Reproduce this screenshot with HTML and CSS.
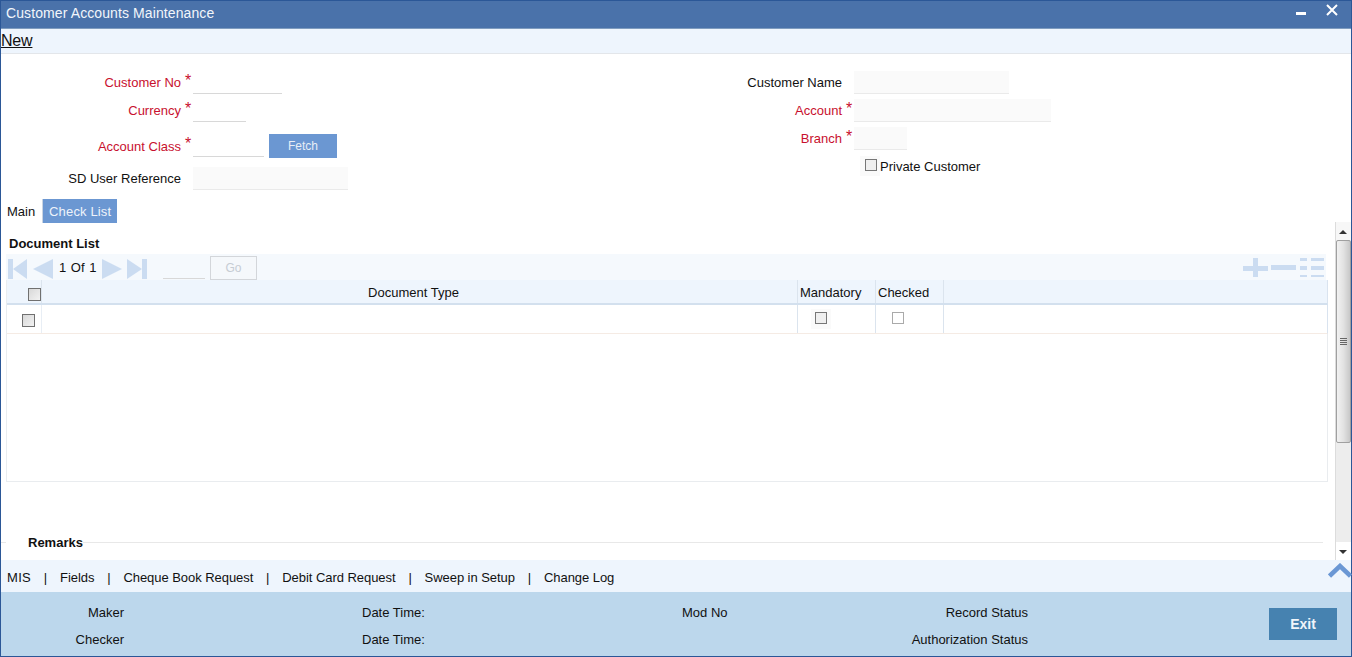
FILE: index.html
```html
<!DOCTYPE html>
<html lang="en">
<head>
<meta charset="utf-8">
<title>Customer Accounts Maintenance</title>
<link rel="stylesheet" href="styles.css">
</head>
<body>
<div class="window">
  <header class="titlebar">
    <span class="title">Customer Accounts Maintenance</span>
    <span class="win-btns">
      <svg class="ico-min" width="10" height="3" viewBox="0 0 10 3"><rect width="10" height="3" fill="#fff"/></svg>
      <svg class="ico-close" width="12" height="12" viewBox="0 0 12 12"><path d="M1 1 11 11M11 1 1 11" stroke="#fff" stroke-width="2" fill="none"/></svg>
    </span>
  </header>
  <div class="toolbar"><a class="new-link">New</a></div>

  <section class="form">
    <div class="form-col">
      <div class="field r1"><span class="lbl req">Customer No</span><span class="star">*</span><span class="inp w89"></span></div>
      <div class="field r2"><span class="lbl req">Currency</span><span class="star">*</span><span class="inp w53"></span></div>
      <div class="field r3"><span class="lbl req">Account Class</span><span class="star">*</span><span class="inp w71"></span><button class="fetch">Fetch</button></div>
      <div class="field r4"><span class="lbl">SD User Reference</span><span class="star"></span><span class="inp ro w155"></span></div>
    </div>
    <div class="form-col right">
      <div class="field r1"><span class="lbl">Customer Name</span><span class="star"></span><span class="inp ro w155"></span></div>
      <div class="field r2"><span class="lbl req">Account</span><span class="star">*</span><span class="inp ro w197"></span></div>
      <div class="field r2"><span class="lbl req">Branch</span><span class="star">*</span><span class="inp ro w53"></span></div>
      <label class="private"><span class="cb-wrap"><span class="cb"></span></span>Private Customer</label>
    </div>
  </section>

  <nav class="tabs"><span class="tab">Main</span><span class="tab active">Check List</span></nav>

  <div class="pane">
    <div class="pane-main">
      <h2 class="doc-title">Document List</h2>
      <div class="grid-tools">
        <svg class="nav" width="140" height="20" viewBox="0 0 140 20" fill="#cbdcf1">
          <rect x="1" y="0" width="5" height="20"/><path d="M6 10 20 0V20Z"/>
          <path d="M26 10 46 0V20Z"/>
          <path d="M95 0 115 10 95 20Z"/>
          <path d="M120 0 135 10 120 20Z"/><rect x="135" y="0" width="5" height="20"/>
        </svg>
        <span class="pager">1 Of 1</span>
        <span class="page-inp"></span>
        <button class="go">Go</button>
        <svg class="tools" width="81" height="19" viewBox="0 0 81 19" fill="#cbdcf1">
          <rect x="0" y="8" width="25" height="5"/><rect x="10" y="0" width="5" height="19"/>
          <rect x="28" y="7" width="25" height="5"/>
          <rect x="57" y="0" width="7" height="3"/><rect x="57" y="8" width="7" height="4"/><rect x="57" y="17" width="7" height="2"/>
          <rect x="68" y="0" width="13" height="3"/><rect x="68" y="8" width="13" height="4"/><rect x="68" y="17" width="13" height="2"/>
        </svg>
      </div>
      <div class="table">
        <div class="thead">
          <div class="c c-sel"><span class="cb big"></span></div>
          <div class="c c-type">Document Type</div>
          <div class="c c-man">Mandatory</div>
          <div class="c c-chk">Checked</div>
          <div class="c c-rest"></div>
        </div>
        <div class="trow">
          <div class="c c-sel"><span class="cb big shift"></span></div>
          <div class="c c-type"></div>
          <div class="c c-man"><span class="cb-wrap"><span class="cb"></span></span></div>
          <div class="c c-chk"><span class="cb off"></span></div>
          <div class="c c-rest"></div>
        </div>
      </div>
      <div class="remarks"><span>Remarks</span></div>
    </div>
    <div class="scrollbar">
      <span class="arrow up"></span>
      <span class="thumb"><i></i></span>
      <span class="arrow down"></span>
    </div>
  </div>

  <div class="links">
    <span class="mis">MIS</span><b>|</b><span>Fields</span><b>|</b><span>Cheque Book Request</span><b>|</b><span>Debit Card Request</span><b>|</b><span>Sweep in Setup</span><b>|</b><span>Change Log</span>
    <svg class="chev" width="24" height="16" viewBox="0 0 24 16"><path d="M1.5 13 12 3 22.5 13" fill="none" stroke="#6a97d4" stroke-width="4.5" stroke-linejoin="miter"/></svg>
  </div>

  <footer class="audit">
    <div class="audit-grid">
      <span class="a1">Maker</span><span class="a2">Date Time:</span><span class="a3">Mod No</span><span class="a4">Record Status</span>
      <span class="a1">Checker</span><span class="a2">Date Time:</span><span class="a3"></span><span class="a4">Authorization Status</span>
    </div>
    <button class="exit">Exit</button>
  </footer>
</div>
</body>
</html>
```
FILE: styles.css
```css
* { box-sizing: border-box; }
html, body { margin: 0; height: 100%; overflow: hidden; }
body { font: 13px "Liberation Sans", Arial, sans-serif; color: #111; background: #fff; }

.window { height: 657px; display: flex; flex-direction: column; border: 1px solid #2b5797; }

.titlebar { height: 28px; flex: none; background: #4a72aa; border-bottom: 1px solid #7f9cbf; display: flex; align-items: center; justify-content: space-between; padding: 0 13px 0 5px; color: #f2f6fb; }
.title { position: relative; top: -2px; font-size: 14px; letter-spacing: 0.1px; }
.win-btns { display: flex; align-items: flex-start; gap: 20px; height: 100%; }
.ico-min { margin-top: 11px; }
.ico-close { margin-top: 3px; }

.toolbar { height: 25px; flex: none; background: #eef5fd; border-bottom: 1px solid #e3e6ea; }
.new-link { font-size: 16px; line-height: 23px; letter-spacing: -0.2px; text-decoration: underline; color: #111; }

.form { height: 145px; flex: none; display: grid; grid-template-columns: 690px 1fr; padding-top: 17px; }
.form-col { display: flex; flex-direction: column; }
.field { display: flex; align-items: center; height: 23px; }
.r1, .r2 { margin-bottom: 5px; }
.r3 { height: 24px; margin-top: 7px; margin-bottom: 9px; }
.r3 .inp { align-self: flex-start; }
.lbl { text-align: right; width: 180px; }
.right .lbl { width: 151px; }
.req { color: #c8102e; }
.star { width: 12px; color: #c8102e; font-size: 16px; padding-left: 4px; align-self: flex-start; line-height: 20px; }
.inp { display: block; height: 23px; border-bottom: 1px solid #d8d8d8; }
.ro { background: #fafafa; border-bottom-color: #eaeaea; }
.w53 { width: 53px; } .w71 { width: 71px; } .w89 { width: 89px; } .w155 { width: 155px; } .w197 { width: 197px; }
.fetch { width: 68px; height: 24px; margin-left: 5px; border: 0; padding: 0; background: #6b97d2; color: #e8eef6; font: 12px "Liberation Sans", Arial, sans-serif; }
.private { display: flex; align-items: center; height: 20px; margin: 1px 0 0 169px; }
.cb-wrap { display: flex; align-items: center; justify-content: center; width: 20px; height: 20px; background: #fafafa; }
.private .cb-wrap .cb { position: relative; top: -1px; left: 1px; }

.cb { display: inline-block; width: 12px; height: 12px; border: 1px solid #777; background: #efefef; }
.cb.big { width: 13px; height: 13px; background: linear-gradient(135deg, #d8d8d8, #f2f2f2); border-color: #707070; }
.cb.off { background: #fff; border-color: #aaa; }

.tabs { height: 23px; flex: none; display: flex; padding-left: 6px; gap: 7px; position: relative; z-index: 1; }
.tab { line-height: 25px; height: 24px; }
.tab.active { width: 75px; text-align: center; letter-spacing: 0.15px; background: #6b97d2; color: #eef3fa; border-left: 1px solid #c9d4e2; }

.pane { flex: 1; min-height: 0; display: flex; overflow: hidden; }
.pane-main { flex: 1; min-width: 0; padding: 13px 6px 0 4px; }
.doc-title { margin: 0; height: 19px; padding-left: 4px; font-size: 13px; font-weight: bold; line-height: 18px; }
.grid-tools { height: 26px; margin-right: 3px; margin-left: 1px; background: #f5f9fd; display: flex; align-items: center; padding: 0 2px 0 1px; }
.nav { flex: none; margin: 4px -140px 0 0; }
.pager { width: 88px; margin-left: 52px; flex: none; word-spacing: 1px; }
.page-inp { width: 42px; height: 24px; margin-left: 16px; border-bottom: 1px solid #d8d8d8; flex: none; }
.go { width: 47px; height: 24px; margin: 2px 0 0 5px; background: #f5f8fb; border: 1px solid #d3d6da; color: #c6ccd3; font: 12px "Liberation Sans", Arial, sans-serif; padding: 0; }
.tools { margin-left: auto; }

.table { margin-left: 1px; height: 202px; width: 1322px; border: 1px solid #e9ecef; border-width: 0 1px 1px 1px; }
.thead, .trow { display: flex; border-right: 1px solid #d9e3ef; margin-right: -1px; }
.thead { height: 25px; background: #eef5fd; border-bottom: 2px solid #d3e0ee; }
.thead .c { padding-top: 1px; }
.trow { height: 29px; border-bottom: 1px solid #f5ebe4; }
.c { display: flex; align-items: center; justify-content: center; border-right: 1px solid #dbe4ee; }
.c-sel { width: 35px; }
.thead .c-sel .cb { margin-left: 20px; margin-top: 4px; }
.trow .c-sel { border-right-color: #e8eef5; }
.cb.shift { margin: 2px 0 0 9px; }
.c-type { width: 756px; }
.thead .c-type { padding-right: 12px; }
.c-man { width: 78px; }
.c-chk { width: 68px; }
.thead .c-man, .thead .c-chk { justify-content: flex-start; padding-left: 2px; }
.c-rest { flex: 1; border-right: 0; }
.trow .c-man { justify-content: flex-start; padding-left: 13px; }
.trow .c-chk { justify-content: flex-start; padding-left: 16px; }
.trow .c-man .cb, .trow .c-chk .cb { margin-top: -2px; }

.remarks { margin: 60px 0 0 -4px; width: 1322px; height: 1px; background: #e8e8e8; position: relative; }
.remarks span { position: absolute; left: 5px; top: -8px; padding: 0 0 0 22px; background: #fff; font-size: 13px; font-weight: bold; line-height: 18px; }

.scrollbar { width: 16px; flex: none; background: #ededed; border-left: 1px solid #dcdcdc; display: flex; flex-direction: column; }
.arrow { height: 18px; flex: none; background: #f7f7f7; position: relative; }
.arrow::after { content: ""; position: absolute; left: 3px; border: 4px solid transparent; }
.arrow.up::after { top: 4px; border-bottom: 4px solid #333; }
.arrow.down { margin-top: auto; background: #fff; }
.arrow.down::after { top: 8px; border-top: 4px solid #333; }
.thumb { height: 203px; flex: none; background: linear-gradient(90deg, #f2f2f2, #e2e2e2 50%, #c8c8c8); border: 1px solid #a0a0a0; border-radius: 2px; display: flex; align-items: center; justify-content: center; }
.thumb i { width: 7px; height: 7px; background: repeating-linear-gradient(#666 0 1px, transparent 1px 2px); }

.links { height: 32px; flex: none; background: #eef5fd; display: flex; align-items: center; padding: 2px 0 0 6px; position: relative; letter-spacing: -0.05px; }
.links .mis { letter-spacing: 0.3px; }
.links b { font-weight: normal; width: 29px; text-align: center; }
.chev { position: absolute; right: -1px; top: 3px; }

.audit { height: 64px; flex: none; background: #bcd7ec; display: flex; position: relative; }
.audit-grid { flex: 1; display: grid; grid-template-columns: 123px 300px 303px 301px; grid-auto-rows: 27px; padding-top: 13px; }
.a1, .a4 { text-align: right; }
.a2 { padding-left: 238px; white-space: nowrap; }
.a3 { padding-left: 258px; white-space: nowrap; }
.exit { position: absolute; right: 14px; top: 16px; width: 68px; height: 32px; border: 0; padding: 0; background: #4682b0; color: #f0f5fa; font: bold 14px "Liberation Sans", Arial, sans-serif; }
```
